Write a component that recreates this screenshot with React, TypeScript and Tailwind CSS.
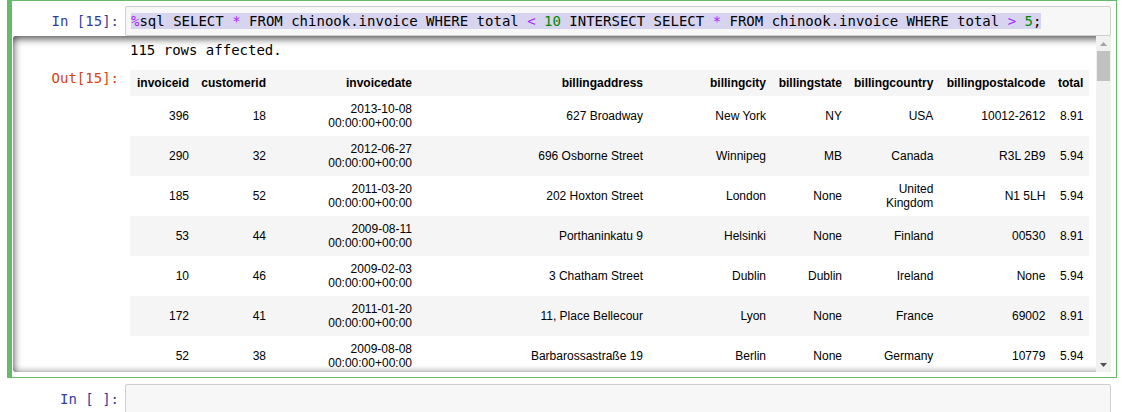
// Jupyter notebook cell: %sql INTERSECT query with scrolled table output
import React from "react";

const cols = [
  { name: "invoiceid", w: "w-[65px]" },
  { name: "customerid", w: "w-[77px]" },
  { name: "invoicedate", w: "w-[146px]" },
  { name: "billingaddress", w: "w-[231px]" },
  { name: "billingcity", w: "w-[123px]" },
  { name: "billingstate", w: "w-[76px]" },
  { name: "billingcountry", w: "w-[91px]" },
  { name: "billingpostalcode", w: "w-[112px]" },
  { name: "total", w: "w-[38px]" },
];

const rows = [
  ["396", "18", "2013-10-08 00:00:00+00:00", "627 Broadway", "New York", "NY", "USA", "10012-2612", "8.91"],
  ["290", "32", "2012-06-27 00:00:00+00:00", "696 Osborne Street", "Winnipeg", "MB", "Canada", "R3L 2B9", "5.94"],
  ["185", "52", "2011-03-20 00:00:00+00:00", "202 Hoxton Street", "London", "None", "United Kingdom", "N1 5LH", "5.94"],
  ["53", "44", "2009-08-11 00:00:00+00:00", "Porthaninkatu 9", "Helsinki", "None", "Finland", "00530", "8.91"],
  ["10", "46", "2009-02-03 00:00:00+00:00", "3 Chatham Street", "Dublin", "Dublin", "Ireland", "None", "5.94"],
  ["172", "41", "2011-01-20 00:00:00+00:00", "11, Place Bellecour", "Lyon", "None", "France", "69002", "8.91"],
  ["52", "38", "2009-08-08 00:00:00+00:00", "Barbarossastraße 19", "Berlin", "None", "Germany", "10779", "5.94"],
];

const mono = "font-['DejaVu_Sans_Mono',monospace] text-[14px]";

const Prompt = ({ children, color }: { children: React.ReactNode; color: string }) => (
  <div className={`w-[112px] shrink-0 pr-[6px] text-right leading-[18px] whitespace-pre ${mono} ${color}`}>
    {children}
  </div>
);

const P = ({ children }: { children: React.ReactNode }) => <span className="text-[#aa22ff]">{children}</span>;
const N = ({ children }: { children: React.ReactNode }) => <span className="text-[#008800]">{children}</span>;

const App = () => {
  return (
    <div className="min-h-[412px] bg-white">
      {/* 선택된 셀 */}
      <div className="ml-[7px] w-[1110px] border border-l-[5px] border-[#66bb6a] pl-px pr-[5px] py-[5px]">
        {/* 입력 */}
        <div className="flex">
          <Prompt color="text-[#303f9f]">
            <div className="pt-[6px]">In [15]:</div>
          </Prompt>
          <div className="h-[30px] flex-1 rounded-[2px] border border-[#cfcfcf] bg-[#f7f7f7] px-[5px] py-[5px]">
            <div className={`whitespace-pre leading-[18px] text-black ${mono}`}>
              <span className="bg-[#d7d4f0]">
                <P>%</P>sql SELECT <P>*</P> FROM chinook.invoice WHERE total <P>&lt;</P> <N>10</N> INTERSECT SELECT{" "}
                <P>*</P> FROM chinook.invoice WHERE total <P>&gt;</P> <N>5</N>;
              </span>
            </div>
          </div>
        </div>

        {/* 출력 (스크롤 영역) */}
        <div className="relative flex h-[336px] overflow-hidden rounded-[2px]">
          <div className="flex-1 overflow-hidden">
            <div className="flex pt-[6px]">
              <div className="w-[112px] shrink-0" />
              <div className={`pl-[5px] leading-[17px] text-black ${mono}`}>115 rows affected.</div>
            </div>
            <div className="mt-[11px] flex">
              <Prompt color="text-[#d84315]">
                <div className="-mt-px">Out[15]:</div>
              </Prompt>
              <div className="pl-[5px]">
                <table className="table-fixed border-collapse font-['Liberation_Sans',Arial,sans-serif] text-[12px] leading-[14px] text-black">
                  <colgroup>
                    {cols.map((c) => (
                      <col key={c.name} className={c.w} />
                    ))}
                  </colgroup>
                  <tbody>
                    <tr className="bg-[#f5f5f5]">
                      {cols.map((c) => (
                        <th key={c.name} className="px-[6px] py-[6px] text-right align-middle font-bold">
                          {c.name}
                        </th>
                      ))}
                    </tr>
                    {rows.map((r, i) => (
                      <tr key={r[0] + r[1]} className={i % 2 === 1 ? "bg-[#f5f5f5]" : "bg-white"}>
                        {r.map((v, j) => (
                          <td key={j} className="px-[6px] py-[6px] text-right align-middle">
                            {v}
                          </td>
                        ))}
                      </tr>
                    ))}
                  </tbody>
                </table>
              </div>
            </div>
          </div>
          {/* 그림자 오버레이 */}
          <div className="pointer-events-none absolute inset-0 rounded-[2px] shadow-[inset_0_2px_8px_rgba(0,0,0,0.8)]" />
          {/* 스크롤바 */}
          <div className="relative z-10 flex w-[15px] flex-col bg-[#f1f1f1]">
            <div className="flex h-[15px] items-center justify-center">
              <svg width="7" height="4" viewBox="0 0 7 4">
                <polygon points="3.5,0 7,4 0,4" fill="#a3a3a3" />
              </svg>
            </div>
            <div className="mx-px h-[30px] bg-[#c1c1c1]" />
            <div className="flex-1" />
            <div className="flex h-[15px] items-center justify-center">
              <svg width="7" height="4" viewBox="0 0 7 4">
                <polygon points="0,0 7,0 3.5,4" fill="#505050" />
              </svg>
            </div>
          </div>
        </div>
      </div>

      {/* 빈 셀 */}
      <div className="ml-[7px] w-[1110px] border border-transparent pl-[5px] pr-[5px] pt-[5px]">
        <div className="flex">
          <Prompt color="text-[#303f9f]">
            <div className="pt-[6px]">In [ ]:</div>
          </Prompt>
          <div className="h-[30px] flex-1 rounded-[2px] border border-[#cfcfcf] bg-[#f7f7f7]" />
        </div>
      </div>
    </div>
  );
};

export default App;
